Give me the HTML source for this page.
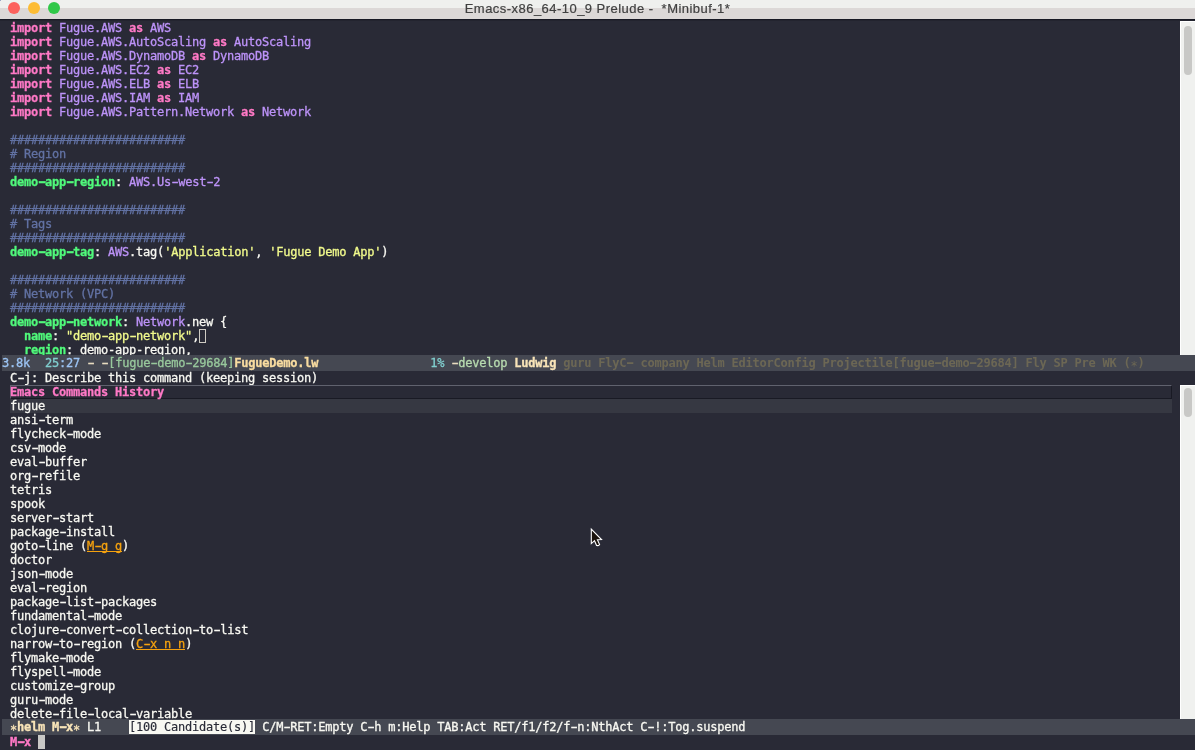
<!DOCTYPE html>
<html lang="en">
<head>
<meta charset="utf-8">
<title>Emacs-x86_64-10_9 Prelude - *Minibuf-1*</title>
<style>
html,body{margin:0;padding:0;}
body{width:1195px;height:750px;overflow:hidden;background:#292a36;position:relative;
 font-family:"DejaVu Sans Mono","Liberation Mono",monospace;font-size:12px;letter-spacing:-0.224609px;color:#f8f8f2;-webkit-text-stroke:0.3px;}
#frame{position:absolute;left:0;top:0;width:1195px;height:750px;overflow:hidden;will-change:transform;}
.titlebar{position:absolute;left:0;top:0;width:1195px;height:19px;background:linear-gradient(#eff0ee 0,#eff0ee 8px,#dcd8d7 8px,#dcd8d7 100%);}
.titlebar .edge{position:absolute;left:0;top:19px;width:1195px;height:2px;background:linear-gradient(#181924 0,#181924 1px,#23242f 1px,#23242f 2px);}
.title{position:absolute;left:0;top:0;width:1195px;height:17px;line-height:17px;text-align:center;
 font-family:"Liberation Sans",Arial,sans-serif;font-size:13px;letter-spacing:0.46px;color:#404040;-webkit-text-stroke:0.2px;white-space:pre;}
.dot{position:absolute;top:2px;width:12px;height:12px;border-radius:50%;}
.red{left:8px;background:#fc615d;}
.yel{left:28px;background:#fdbc34;}
.grn{left:48px;background:#30c848;}
.win{position:absolute;left:0;overflow:hidden;width:1180px;}
.ln{position:absolute;left:10px;height:14px;line-height:14px;white-space:pre;}
.k{color:#ff79c6;font-weight:bold;}
.t{color:#bd93f9;}
.tb{color:#bd93f9;font-weight:bold;}
.c{color:#6272a4;}
.v{color:#50fa7b;font-weight:bold;}
.s{color:#f1fa8c;}
.kb{color:#f5a20f;display:inline-block;height:14px;vertical-align:top;background:linear-gradient(#f5a20f,#f5a20f) no-repeat 0 12px / 100% 1px;}
.a{display:inline-block;transform:translateY(3px);font-weight:normal;}
.h{display:inline-block;transform:translateX(0.4px) scaleX(1.7);}
.cur{display:inline-block;width:5px;height:12px;border:1px solid #cfccc4;vertical-align:top;margin-top:0;box-sizing:content-box;}
.ml{position:absolute;left:2px;width:1193px;height:16px;line-height:16px;background:#454852;white-space:pre;}
.sb{position:absolute;left:1180px;width:15px;background:#f0f1ef;border-left:1px solid #fff;border-top:1px solid #fff;box-sizing:border-box;}
.th{position:absolute;left:3px;width:8px;border-radius:4px;background:#c8c8c6;}
.m1{color:#9cc4f4;} .m2{color:#80cfcf;} .m3{color:#98c89c;} .m4{color:#f8dca0;font-weight:bold;}
.m5{color:#b8dcb0;} .m6{color:#f8e4b8;font-weight:bold;} .m7{color:#6c6754;font-weight:bold;-webkit-text-stroke:0;} .m8{color:#e8dcc0;}
.gap{margin-right:1px;}
.hh{color:#ff79c6;font-weight:bold;}
.hbox{position:absolute;left:10px;top:385px;width:1162px;height:14px;box-sizing:border-box;
 border-top:1px solid #60626e;border-left:1px solid #60626e;border-bottom:1px solid #191a24;border-right:1px solid #191a24;}
.sel{position:absolute;left:10px;top:399px;width:1162px;height:14px;background:#363842;}
.cand{background:#f8f8f2;color:#282a36;-webkit-text-stroke:0.15px;}
.mcur{display:inline-block;width:7px;height:14px;background:#c8c8c6;vertical-align:top;margin-top:0;}
</style>
</head>
<body>
<div id="frame">
<div class="titlebar"><div style="position:absolute;left:0;top:0;width:1px;height:1px;background:#9aa6c6"></div><div class="dot red"></div><div class="dot yel"></div><div class="dot grn"></div>
<div class="title">Emacs-x86_64-10_9 Prelude -  *Minibuf-1*</div><div class="edge"></div></div>

<div class="win" style="top:21px;height:334px;">
<div class="ln" style="top:0px"><span class="k">import</span> <span class="t">Fugue.AWS</span> <span class="k">as</span> <span class="t">AWS</span></div>
<div class="ln" style="top:14px"><span class="k">import</span> <span class="t">Fugue.AWS.AutoScaling</span> <span class="k">as</span> <span class="t">AutoScaling</span></div>
<div class="ln" style="top:28px"><span class="k">import</span> <span class="t">Fugue.AWS.DynamoDB</span> <span class="k">as</span> <span class="t">DynamoDB</span></div>
<div class="ln" style="top:42px"><span class="k">import</span> <span class="t">Fugue.AWS.EC2</span> <span class="k">as</span> <span class="t">EC2</span></div>
<div class="ln" style="top:56px"><span class="k">import</span> <span class="t">Fugue.AWS.ELB</span> <span class="k">as</span> <span class="t">ELB</span></div>
<div class="ln" style="top:70px"><span class="k">import</span> <span class="t">Fugue.AWS.IAM</span> <span class="k">as</span> <span class="t">IAM</span></div>
<div class="ln" style="top:84px"><span class="k">import</span> <span class="t">Fugue.AWS.Pattern.Network</span> <span class="k">as</span> <span class="t">Network</span></div>
<div class="ln" style="top:112px"><span class="c">#########################</span></div>
<div class="ln" style="top:126px"><span class="c"># Region</span></div>
<div class="ln" style="top:140px"><span class="c">#########################</span></div>
<div class="ln" style="top:154px"><span class="v">demo<span class="h">-</span>app<span class="h">-</span>region</span>: <span class="t">AWS.Us<span class="h">-</span>west<span class="h">-</span>2</span></div>
<div class="ln" style="top:182px"><span class="c">#########################</span></div>
<div class="ln" style="top:196px"><span class="c"># Tags</span></div>
<div class="ln" style="top:210px"><span class="c">#########################</span></div>
<div class="ln" style="top:224px"><span class="v">demo<span class="h">-</span>app<span class="h">-</span>tag</span>: <span class="t">AWS</span>.tag(<span class="s">'Application'</span>, <span class="s">'Fugue Demo App'</span>)</div>
<div class="ln" style="top:252px"><span class="c">#########################</span></div>
<div class="ln" style="top:266px"><span class="c"># Network (VPC)</span></div>
<div class="ln" style="top:280px"><span class="c">#########################</span></div>
<div class="ln" style="top:294px"><span class="v">demo<span class="h">-</span>app<span class="h">-</span>network</span>: <span class="t">Network</span>.new {</div>
<div class="ln" style="top:308px">  <span class="v">name</span>: <span class="s">"demo<span class="h">-</span>app<span class="h">-</span>network"</span>,<span class="cur"></span></div>
<div class="ln" style="top:322px">  <span class="v">region</span>: demo-app-region,</div>
</div>
<div class="sb" style="top:21px;height:334px;"><div class="th" style="top:4px;height:49px;"></div></div>
<div class="ml" style="top:355px"><span class="m1">3.8k</span><span class="gap">  </span><span class="m2">25</span><span class="m1">:27</span> <span class="m8"><span class="h">-</span> <span class="h">-</span></span><span class="m3">[fugue<span class="h">-</span>demo<span class="h">-</span>29684]</span><span class="m4">FugueDemo.lw</span>                <span class="m2">1%</span> <span class="m8"><span class="h">-</span></span><span class="m5">develop</span> <span class="m6">Ludwig</span> <span class="m7">guru FlyC<span class="h">-</span> company Helm EditorConfig Projectile[fugue<span class="h">-</span>demo<span class="h">-</span>29684] Fly SP Pre WK (<span class="a">*</span>)</span></div>
<div class="ln" style="top:371px">C<span class="h">-</span>j: Describe this command (keeping session)</div>
<div class="hbox"></div><div class="sel"></div>
<div class="ln hh" style="top:385px">Emacs Commands History</div>
<div class="win" style="top:399px;height:320px;">
<div class="ln" style="top:0px">fugue</div>
<div class="ln" style="top:14px">ansi<span class="h">-</span>term</div>
<div class="ln" style="top:28px">flycheck<span class="h">-</span>mode</div>
<div class="ln" style="top:42px">csv<span class="h">-</span>mode</div>
<div class="ln" style="top:56px">eval<span class="h">-</span>buffer</div>
<div class="ln" style="top:70px">org<span class="h">-</span>refile</div>
<div class="ln" style="top:84px">tetris</div>
<div class="ln" style="top:98px">spook</div>
<div class="ln" style="top:112px">server<span class="h">-</span>start</div>
<div class="ln" style="top:126px">package<span class="h">-</span>install</div>
<div class="ln" style="top:140px">goto<span class="h">-</span>line (<span class="kb">M<span class="h">-</span>g g</span>)</div>
<div class="ln" style="top:154px">doctor</div>
<div class="ln" style="top:168px">json<span class="h">-</span>mode</div>
<div class="ln" style="top:182px">eval<span class="h">-</span>region</div>
<div class="ln" style="top:196px">package<span class="h">-</span>list<span class="h">-</span>packages</div>
<div class="ln" style="top:210px">fundamental<span class="h">-</span>mode</div>
<div class="ln" style="top:224px">clojure<span class="h">-</span>convert<span class="h">-</span>collection<span class="h">-</span>to<span class="h">-</span>list</div>
<div class="ln" style="top:238px">narrow<span class="h">-</span>to<span class="h">-</span>region (<span class="kb">C<span class="h">-</span>x n n</span>)</div>
<div class="ln" style="top:252px">flymake<span class="h">-</span>mode</div>
<div class="ln" style="top:266px">flyspell<span class="h">-</span>mode</div>
<div class="ln" style="top:280px">customize<span class="h">-</span>group</div>
<div class="ln" style="top:294px">guru<span class="h">-</span>mode</div>
<div class="ln" style="top:308px">delete<span class="h">-</span>file<span class="h">-</span>local<span class="h">-</span>variable</div>
</div>
<div class="sb" style="top:385px;height:334px;"><div class="th" style="top:2px;height:29px;"></div></div>
<div class="ml" style="top:719px"><span class="gap"> </span><span class="m6"><span class="a">*</span>helm M<span class="h">-</span>x<span class="a">*</span></span> L1    <span class="cand">[100 Candidate(s)]</span> C/M<span class="h">-</span>RET:Empty C<span class="h">-</span>h m:Help TAB:Act RET/f1/f2/f<span class="h">-</span>n:NthAct C<span class="h">-</span>!:Tog.suspend</div>
<div class="ln" style="top:735px"><span class="hh">M<span class="h">-</span>x</span> <span class="mcur"></span></div>
<svg class="mouse" width="16" height="22" viewBox="0 0 16 22" style="position:absolute;left:589.4px;top:527.1px"><path d="M2.3 2.2 L2.3 16.6 L5.5 13.7 L7.6 18.5 Q9.3 19 10.6 17.6 L8.4 12.7 L12.5 12.6 Z" fill="#1a120c" stroke="#ffffff" stroke-width="1.1" stroke-linejoin="miter"/></svg>
</div>
</body>
</html>
